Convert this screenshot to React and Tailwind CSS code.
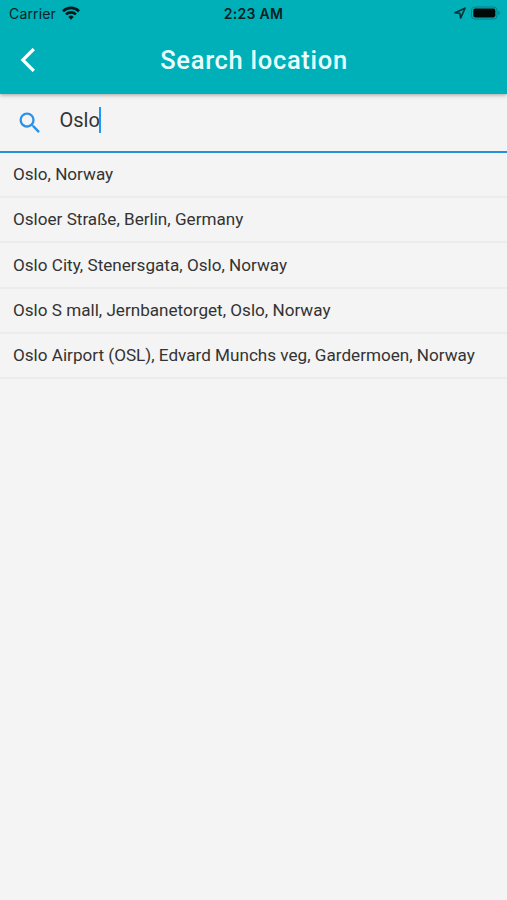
import { useState } from 'react';

const places = [
  'Oslo, Norway',
  'Osloer Straße, Berlin, Germany',
  'Oslo City, Stenersgata, Oslo, Norway',
  'Oslo S mall, Jernbanetorget, Oslo, Norway',
  'Oslo Airport (OSL), Edvard Munchs veg, Gardermoen, Norway',
];

function StatusBar() {
  return (
    <div className="grid h-[26px] grid-cols-3 items-center pl-[9px] pr-[7px] font-['Inter',sans-serif] text-[14px] text-[#052225]">
      <div className="flex items-center gap-[6px]">
        <span className="tracking-[0.15px]">Carrier</span>
        <svg className="h-[14px] w-[18px]" viewBox="0 0 18 14" fill="none" stroke="#061719" strokeWidth="2.6">
          <path d="M1 5.2a11.4 11.4 0 0 1 16 0" />
          <path d="M4 8.4a7.1 7.1 0 0 1 10 0" />
          <path d="M9 13.7 6.3 10.9a3.8 3.8 0 0 1 5.4 0Z" fill="#061719" stroke="none" />
        </svg>
      </div>
      <span className="pr-[2px] text-center font-semibold tracking-[0.3px]">2:23 AM</span>
      <div className="flex items-center justify-end gap-[5px]">
        <svg className="h-3 w-3" viewBox="0 0 12 12" fill="none" stroke="#042e31" strokeWidth="1.6" strokeLinejoin="round">
          <path d="M1 5.8 11 1.2 6.7 11 5.9 6.3Z" />
        </svg>
        <svg className="h-[14px] w-[29px]" viewBox="0 0 29 14">
          <rect x="0.5" y="1" width="25.5" height="12" rx="3.2" fill="none" stroke="#057f86" />
          <rect x="2.3" y="2.6" width="22" height="8.8" rx="1.8" fill="#020707" />
          <path d="M27.3 5v4c1-.4 1.5-1.1 1.5-2s-.5-1.6-1.5-2Z" fill="#057f86" />
        </svg>
      </div>
    </div>
  );
}

function Header() {
  return (
    <header className="relative z-10 h-[94px] bg-[#00b0b9] shadow-[0_1px_4px_rgba(0,0,0,0.35)]">
      <StatusBar />
      <div className="grid h-[67px] grid-cols-[60px_1fr_60px] items-center">
        <button className="pl-[20px]" aria-label="Back">
          <svg className="h-6 w-4" viewBox="0 0 16 24" fill="none" stroke="#fff" strokeWidth="3.2">
            <path d="M13.8 1 2.8 12l11 11" />
          </svg>
        </button>
        <h1 className="pl-px pt-px text-center text-[25.5px] font-medium tracking-[0.7px] text-[#e9ffff]">Search location</h1>
      </div>
    </header>
  );
}

function SearchField({ value, onChange }) {
  return (
    <div className="flex h-[59px] items-start border-b-2 border-[#2490de] pl-[16px] pt-[12px]">
      <svg className="mt-[3px] h-[28px] w-[28px]" viewBox="0 0 24 24" fill="#2a91e8">
        <path d="M15.5 14h-.79l-.28-.27A6.47 6.47 0 0 0 16 9.5 6.5 6.5 0 1 0 9.5 16c1.61 0 3.09-.59 4.23-1.57l.27.28v.79l5 4.99L20.49 19l-4.99-5zm-6 0C7.01 14 5 11.99 5 9.5S7.01 5 9.5 5 14 7.01 14 9.5 11.99 14 9.5 14z" />
      </svg>
      <div className="ml-[15.5px] flex h-[28px] items-center">
        <span className="text-[20px]" onClick={() => onChange(value)}>{value}</span>
        <span className="-ml-px h-[26px] w-[2px] bg-[#2196f3]" />
      </div>
    </div>
  );
}

export default function App() {
  const [query, setQuery] = useState('Oslo');

  return (
    <div className="min-h-screen bg-[#f4f4f4] font-['Roboto',sans-serif] text-[#333]">
      <Header />
      <SearchField value={query} onChange={setQuery} />
      <ul>
        {places.map((place) => (
          <li
            key={place}
            className="flex h-[45.2px] items-center whitespace-nowrap border-b-2 border-[#ececec] pl-[13px] pt-px text-[17.12px]"
            onClick={() => setQuery(place)}
          >
            {place}
          </li>
        ))}
      </ul>
    </div>
  );
}
